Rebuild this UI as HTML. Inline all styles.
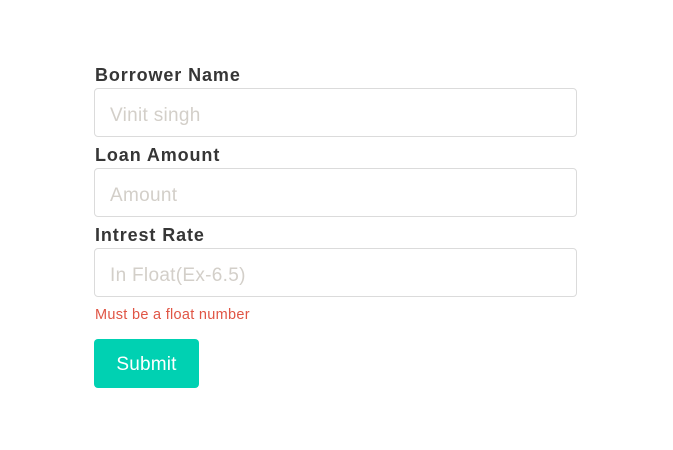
<!DOCTYPE html>
<html><head><style>
body{margin:0;width:673px;height:450px;background:#fff;font-family:"Liberation Sans",sans-serif;position:relative;overflow:hidden}
.l{position:absolute;left:95px;font-weight:bold;font-size:18px;letter-spacing:0.9px;color:#363636}
.i{position:absolute;left:94px;width:481px;height:47px;border:1px solid #dbdbdb;border-radius:4px;box-sizing:content-box}
.i span{position:absolute;left:15px;top:16px;font-size:19px;letter-spacing:0.3px;color:#d3cfc9}
.e{position:absolute;left:95px;top:307px;font-size:14.5px;letter-spacing:0.3px;color:#e05545}
.b{position:absolute;left:94px;top:339px;width:105px;height:49px;background:#00d1b2;border-radius:4px;color:#fff;font-size:19px;letter-spacing:0.2px;text-align:center;line-height:51px}
</style></head><body>
<div class="l" style="top:65px">Borrower Name</div>
<div class="i" style="top:88px"><span>Vinit singh</span></div>
<div class="l" style="top:145px">Loan Amount</div>
<div class="i" style="top:168px"><span>Amount</span></div>
<div class="l" style="top:225px">Intrest Rate</div>
<div class="i" style="top:248px"><span>In Float(Ex-6.5)</span></div>
<div class="e">Must be a float number</div>
<div class="b">Submit</div>
</body></html>
